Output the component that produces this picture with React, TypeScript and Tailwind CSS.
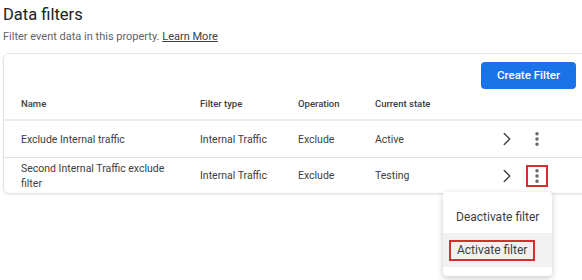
import { ChevronRight, EllipsisVertical } from 'lucide-react';

const rows = [
  { name: 'Exclude Internal traffic', type: 'Internal Traffic', op: 'Exclude', state: 'Active' },
  { name: 'Second Internal Traffic exclude filter', type: 'Internal Traffic', op: 'Exclude', state: 'Testing', open: true },
];

export default function App() {
  return (
    <div className="relative h-[280px] w-[582px] overflow-hidden bg-white font-['Roboto',sans-serif] text-[#3c4043]">
      <div className="pl-[3px] pt-[4px]">
        <h1 className="text-[16.5px] leading-[22px] text-[#202124]">Data filters</h1>
        <p className="mt-[4px] text-[11px] leading-[14px] text-[#5f6368]">
          Filter event data in this property. <span className="text-[#3c4043] underline">Learn More</span>
        </p>
      </div>

      {/* Card */}
      <div className="ml-[3px] mt-[9px] w-[600px] rounded-[6px] border border-[#e3e3e3] shadow-[0_1px_2px_rgba(0,0,0,0.08)]">
        <div className="flex h-[36px] items-start pt-[8px] pl-[477px]">
          <button className="h-[27px] w-[95px] rounded-[4px] bg-[#1a73e8] text-[11.5px] font-medium text-white">
            Create Filter
          </button>
        </div>

        <div className="grid h-[31px] grid-cols-[179px_98px_77px_1fr] items-center border-b-2 border-[#ececec] pl-[17px] text-[9.5px] font-medium text-[#3c4043]">
          <div>Name</div>
          <div>Filter type</div>
          <div>Operation</div>
          <div>Current state</div>
        </div>

        {rows.map((r, i) => (
          <div
            key={r.name}
            className={`grid grid-cols-[179px_98px_77px_119px_26px_6px_22px_1fr] items-center pl-[17px] text-[10.5px] leading-[15px] ${
              i === 0 ? 'h-[37px] border-b border-[#e0e0e0]' : 'h-[35px]'
            }`}
          >
            <div className="pr-[22px]">{r.name}</div>
            <div>{r.type}</div>
            <div>{r.op}</div>
            <div>{r.state}</div>
            <div className="flex justify-center">
              <ChevronRight size={22} strokeWidth={1.5} className="text-[#3c4043]" />
            </div>
            <div />
            <div
              className={`flex h-[22px] w-[22px] items-center justify-center ${
                r.open ? 'border-2 border-[#d32f2f]' : ''
              }`}
            >
              <EllipsisVertical size={18} strokeWidth={2.6} className="text-[#5f6368]" />
            </div>
          </div>
        ))}
      </div>

      {/* Menu */}
      <div className="absolute left-[443px] top-[192px] w-[109px] rounded-[4px] bg-white pt-[8px] pb-[9px] shadow-[0_2px_6px_rgba(0,0,0,0.22)]">
        <div className="flex h-[33px] items-center pl-[13px] text-[12px] text-[#3c4043]">Deactivate filter</div>
        <div className="flex h-[34px] items-center bg-[#f1f1f1] pl-[6px]">
          <span className="border-2 border-[#d32f2f] px-[6px] py-[1px] text-[12px] leading-[15px] text-[#3c4043]">
            Activate filter
          </span>
        </div>
      </div>
    </div>
  );
}
